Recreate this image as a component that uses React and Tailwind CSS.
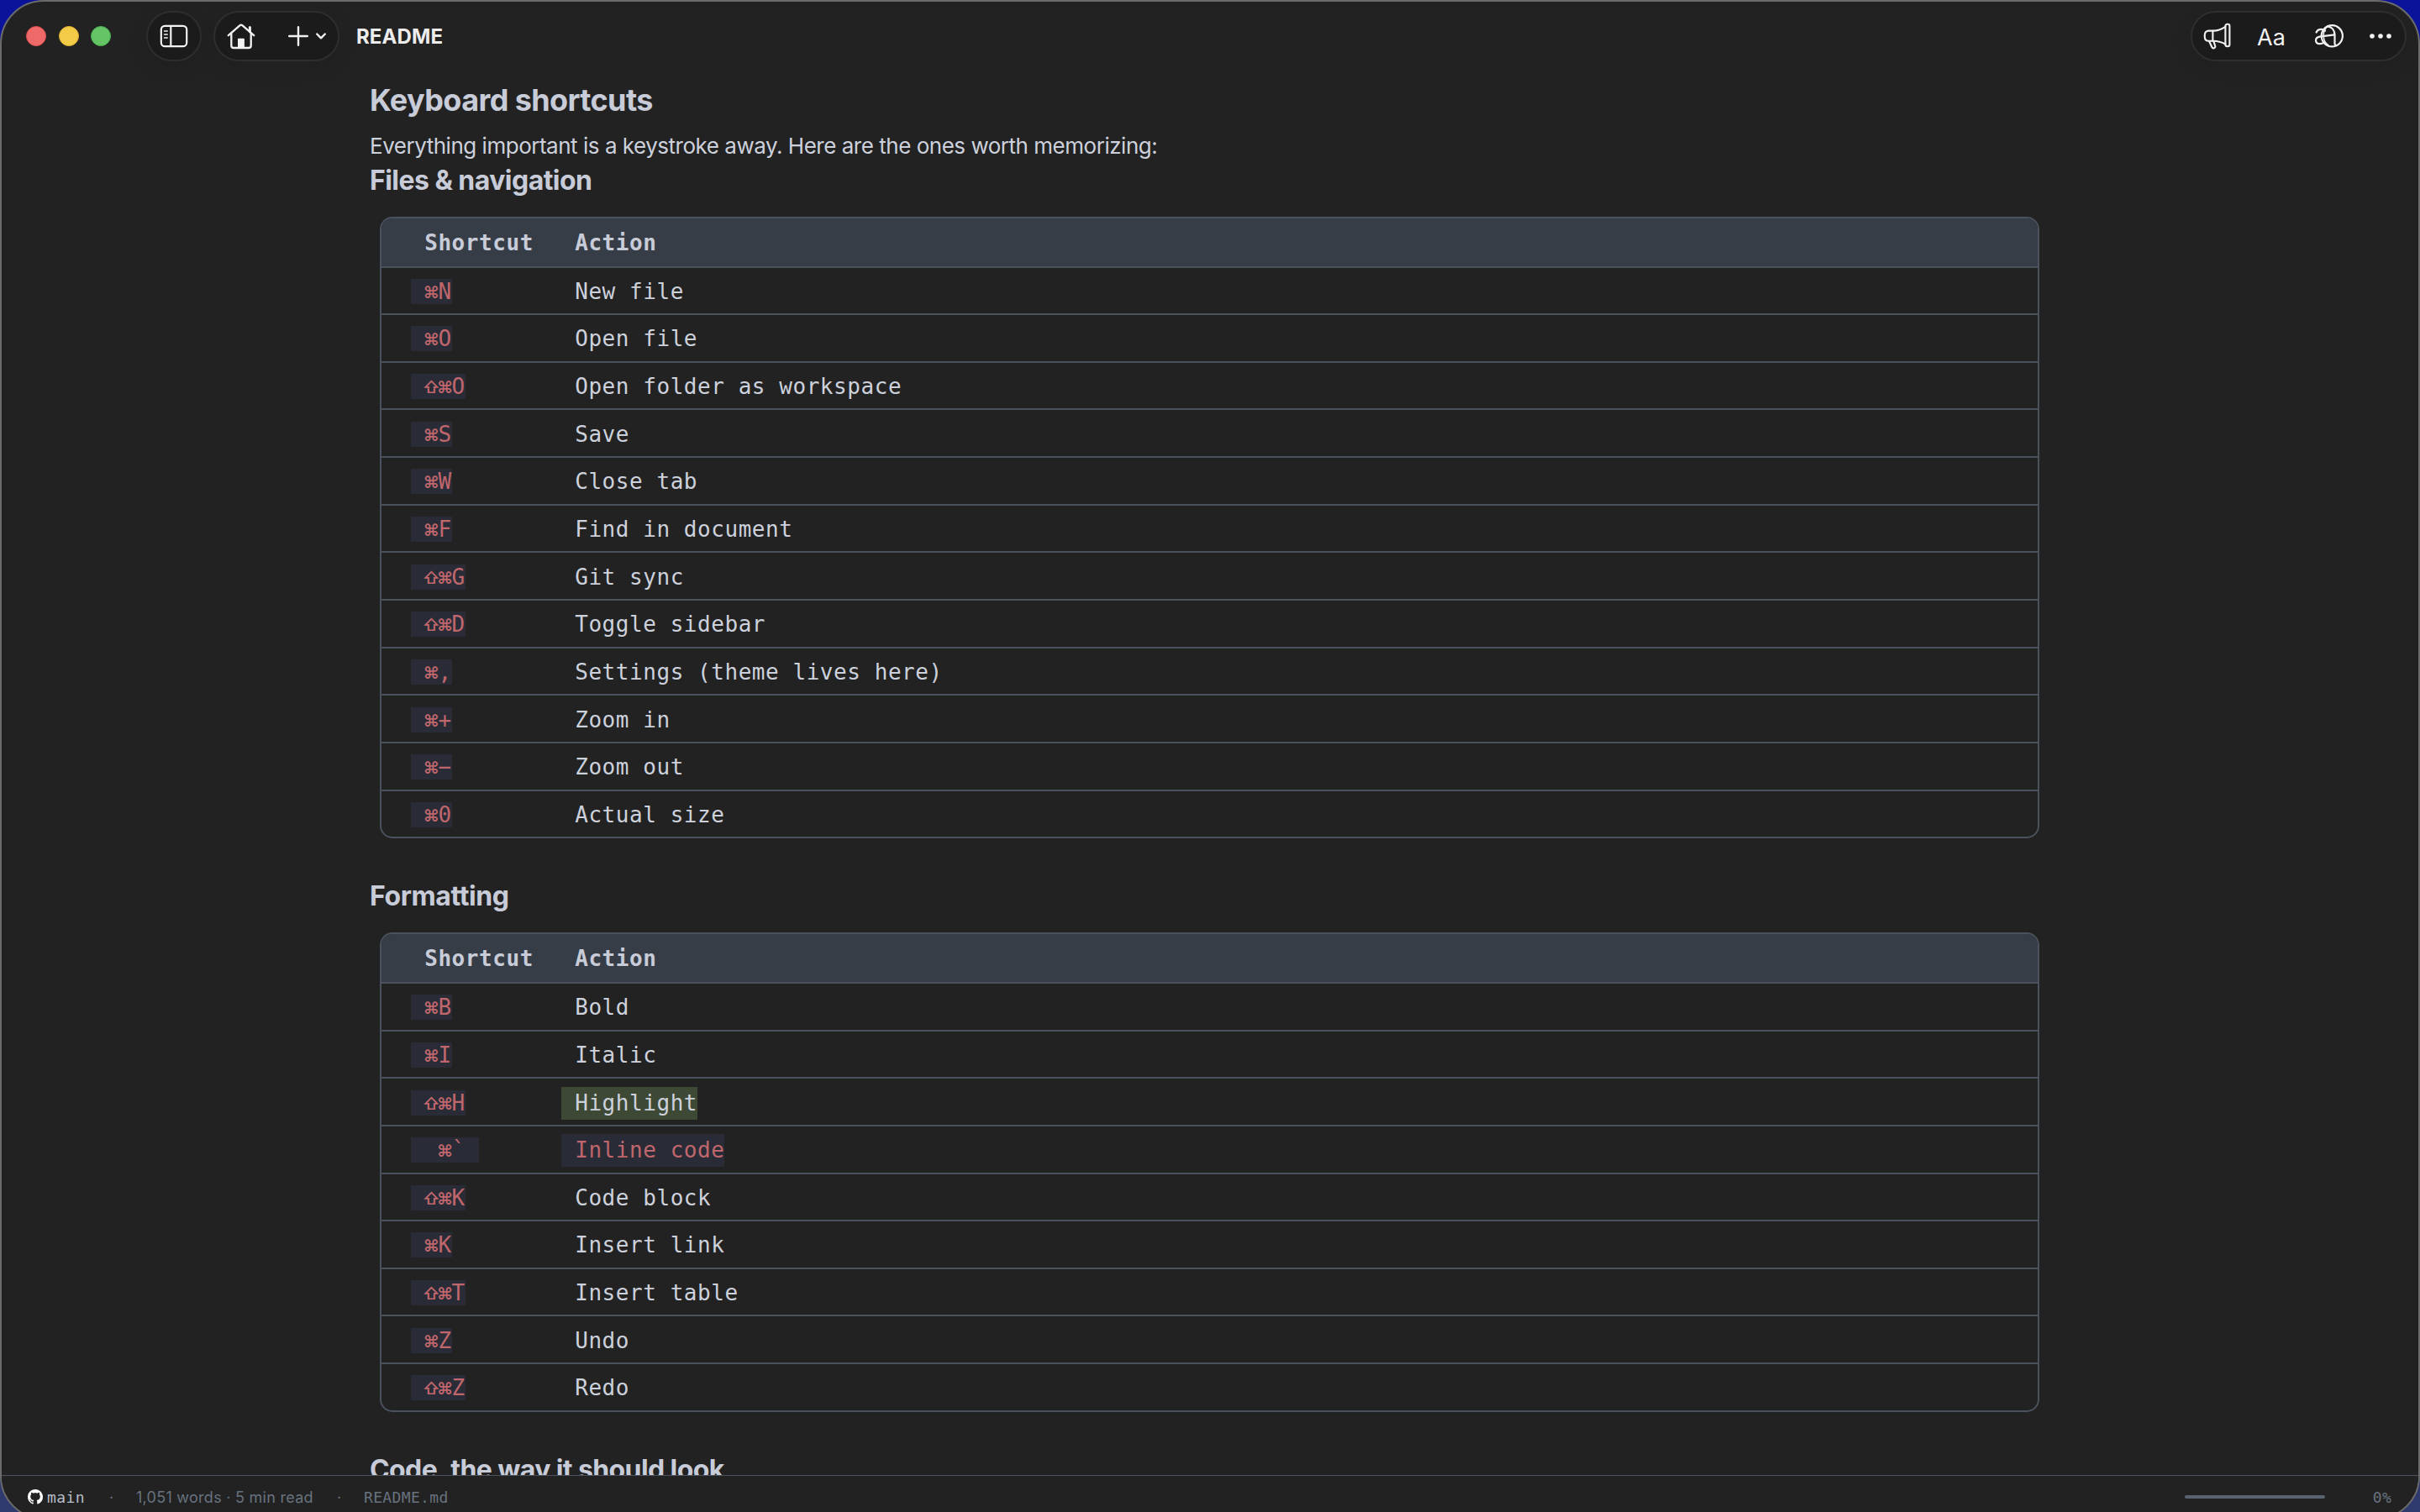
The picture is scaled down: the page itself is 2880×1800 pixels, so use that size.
import clsx from "clsx";

const fileShortcuts = [
  { keys: " ⌘N", action: " New file" },
  { keys: " ⌘O", action: " Open file" },
  { keys: " ⇧⌘O", action: " Open folder as workspace" },
  { keys: " ⌘S", action: " Save" },
  { keys: " ⌘W", action: " Close tab" },
  { keys: " ⌘F", action: " Find in document" },
  { keys: " ⇧⌘G", action: " Git sync" },
  { keys: " ⇧⌘D", action: " Toggle sidebar" },
  { keys: " ⌘,", action: " Settings (theme lives here)" },
  { keys: " ⌘+", action: " Zoom in" },
  { keys: " ⌘−", action: " Zoom out" },
  { keys: " ⌘0", action: " Actual size" },
];

const formatShortcuts = [
  { keys: " ⌘B", action: " Bold" },
  { keys: " ⌘I", action: " Italic" },
  { keys: " ⇧⌘H", action: " Highlight", mark: "highlight" },
  { keys: "  ⌘` ", action: " Inline code", mark: "code" },
  { keys: " ⇧⌘K", action: " Code block" },
  { keys: " ⌘K", action: " Insert link" },
  { keys: " ⇧⌘T", action: " Insert table" },
  { keys: " ⌘Z", action: " Undo" },
  { keys: " ⇧⌘Z", action: " Redo" },
];

function SidebarIcon() {
  return (
    <svg width="34" height="28" viewBox="0 0 34 28" fill="none" stroke="#f2f2f2" strokeWidth="2.2" strokeLinecap="round">
      <rect x="1.8" y="1.8" width="30.4" height="24.4" rx="4.5" />
      <path d="M13.3 2v24" />
      <path d="M5.6 8h3.6M5.6 12h3.6M5.6 16h3.6" strokeWidth="1.6" />
    </svg>
  );
}

function HomeIcon() {
  return (
    <svg width="34" height="32" viewBox="0 0 34 32" fill="none" stroke="#f2f2f2" strokeWidth="2.3" strokeLinecap="round" strokeLinejoin="round">
      <path d="M1.8 15.2 15.6 3.2a2 2 0 0 1 2.7 0l13.9 12" />
      <path d="M5.3 13v14.2a2.8 2.8 0 0 0 2.8 2.8h17.8a2.8 2.8 0 0 0 2.8-2.8V13" />
      <path d="M27.4 5.6v5.2" strokeWidth="3" />
      <path d="M13 29.5V19.6a.8.8 0 0 1 .8-.8h6.3a.8.8 0 0 1 .8.8v9.9z" fill="#f2f2f2" stroke="none" />
    </svg>
  );
}

function MegaphoneIcon() {
  return (
    <svg width="34" height="32" viewBox="0 0 34 32" fill="none" stroke="#f2f2f2" strokeWidth="2.1" strokeLinecap="round" strokeLinejoin="round">
      <path d="M26.4 4.800C21.500 8 17.200 9.600 12 9.600H6.600C3.600 9.600 1.800 11.600 1.800 14.600v2.400c0 3 1.800 4.700 4.800 4.700H12c5.200 0 9.400 1 14.400 3.800" />
      <rect x="26.400" y="1.800" width="5" height="26.400" rx="2.200" />
      <path d="M11.400 9.800v12" />
      <path d="M7.200 22.200l3 6.600c.6 1.300 1.700 1.900 2.700 1.500 1.300-.5 1.700-1.600 1.200-2.900l-1.700-5.200" />
    </svg>
  );
}

// a letter "a" overlapping a globe
function TranslateIcon() {
  return (
    <svg width="36" height="30" viewBox="0 0 36 30" fill="none" stroke="#f2f2f2" strokeWidth="2.200" strokeLinecap="round">
      <circle cx="21.300" cy="14.800" r="12.600" />
      <path d="M16 3.400c5.200.6 8.500 4.900 8.500 10.600v9.400c0 1.500.5 2.400 1.800 2.600" />
      <path d="M2.600 10.500C3.600 8 5.800 6.800 8.500 6.800c2 0 3.500.6 4.500 1.800" />
      <path d="M24.400 13.300 8 15.400c-4 .5-6 2-6 4.600 0 2.600 2 4.200 5 4.200 1.800 0 3.400-.5 4.600-1.500" />
      <path d="M16 3.400C12.800 6 11.200 9.600 11.200 14c0 5.400 2 9.600 5.800 12" strokeWidth="1.600" />
    </svg>
  );
}

function GithubIcon() {
  return (
    <svg width="18" height="18" viewBox="0 0 16 16" fill="#fff">
      <path d="M8 0C3.580 0 0 3.580 0 8c0 3.540 2.290 6.530 5.470 7.590.4.070.55-.17.55-.38 0-.19-.01-.82-.01-1.490-2.010.37-2.530-.49-2.690-.94-.09-.23-.48-.94-.82-1.130-.28-.15-.68-.52-.01-.53.63-.01 1.080.58 1.230.82.72 1.210 1.870.87 2.330.66.07-.52.28-.87.51-1.070-1.780-.2-3.640-.89-3.640-3.950 0-.87.31-1.590.82-2.150-.08-.2-.36-1.020.08-2.120 0 0 .67-.21 2.200.82.64-.18 1.320-.27 2-.27s1.360.09 2 .27c1.530-1.040 2.200-.82 2.200-.82.44 1.100.16 1.920.08 2.120.51.56.82 1.270.82 2.150 0 3.070-1.870 3.750-3.650 3.950.29.25.54.73.54 1.480 0 1.070-.01 1.930-.01 2.200 0 .21.15.46.55.38A8.010 8.010 0 0 0 16 8c0-4.420-3.580-8-8-8z" />
    </svg>
  );
}

function Toolbar() {
  return (
    <header className="flex h-[84px] shrink-0 items-start pt-[11px] pl-[29px] pr-[14px]">
      <div className="flex h-[60px] items-center gap-[14.500px]">
        <span className="size-6 rounded-full border border-[#d9504f] bg-[#ee6a68]" />
        <span className="size-6 rounded-full border border-[#dcae34] bg-[#f4cb46]" />
        <span className="size-6 rounded-full border border-[#49b04d] bg-[#65c466]" />
      </div>
      <button className="ml-[42px] flex h-[60px] w-[66px] items-center justify-center rounded-[30px] border-2 border-[#2e2e2e] bg-[#1b1b1b] shadow-[0_6px_24px_rgba(0,0,0,0.08)]">
        <SidebarIcon />
      </button>
      <div className="ml-[14px] flex h-[60px] w-[150px] items-center rounded-[30px] border-2 border-[#2e2e2e] bg-[#1b1b1b] pl-[14px] shadow-[0_6px_24px_rgba(0,0,0,0.08)]">
        <HomeIcon />
        <svg className="ml-[38px]" width="26" height="26" viewBox="0 0 26 26" stroke="#f2f2f2" strokeWidth="2.400" strokeLinecap="round">
          <path d="M13 2.200v21.600M2.200 13h21.600" />
        </svg>
        <svg className="ml-[7px]" width="14" height="10" viewBox="0 0 14 10" fill="none" stroke="#f2f2f2" strokeWidth="2.400" strokeLinecap="round" strokeLinejoin="round">
          <path d="M2.200 2.500 7 7.300l4.800-4.800" />
        </svg>
      </div>
      <h1 className="ml-[20px] text-[24px] leading-[62px] font-bold tracking-[0.1px] text-[#ececec]">README</h1>
      <div className="ml-auto flex h-[60px] w-[257px] items-center rounded-[30px] border-2 border-[#2e2e2e] bg-[#1b1b1b] pl-[13px] shadow-[0_6px_24px_rgba(0,0,0,0.08)]">
        <MegaphoneIcon />
        <span className="ml-[30px] w-[34px] pt-[2px] text-[27px] leading-none text-[#f2f2f2]">Aa</span>
        <span className="ml-[34px]">
          <TranslateIcon />
        </span>
        <svg className="ml-[29px]" width="28" height="8" viewBox="0 0 28 8" fill="#f2f2f2">
          <circle cx="4" cy="4" r="2.800" />
          <circle cx="14" cy="4" r="2.800" />
          <circle cx="24" cy="4" r="2.800" />
        </svg>
      </div>
    </header>
  );
}

// modifier symbols fill one monospace cell each
function Keys({ value }) {
  return (
    <span className="bg-[#292c36] text-[#c0666d]">
      {[...value].map((ch, i) =>
        ch === "⌘" || ch === "⇧" ? (
          <span key={i} className="inline-flex w-[16.2px] -translate-y-px justify-center font-['Inter',sans-serif] text-[20px] leading-none font-semibold tracking-normal">
            {ch}
          </span>
        ) : (
          ch
        )
      )}
    </span>
  );
}

function ShortcutTable({ rows }) {
  return (
    <div className="mt-[23px] ml-[12px] w-[1975px] overflow-hidden rounded-[15px] border-2 border-[#4a525d] font-['DejaVu_Sans_Mono',monospace] text-[26px] tracking-[0.550px] whitespace-pre">
      <div className="flex h-[56.500px] items-center bg-[#373d47] pt-[2px] pl-[35px] font-bold text-[#c8ccd8]">
        <span className="w-[179px]"> Shortcut</span>
        <span> Action</span>
      </div>
      {rows.map((row) => (
        <div key={row.keys} className="flex h-[56.667px] items-center border-t-2 border-[#4a525d] pt-[3px] pl-[35px] text-[#cdd1dc]">
          <div className="w-[179px]">
            <Keys value={row.keys} />
          </div>
          <span
            className={clsx(
              row.mark === "highlight" && "bg-[#3d4935]",
              row.mark === "code" && "bg-[#292c36] text-[#c0666d]"
            )}
          >
            {row.action}
          </span>
        </div>
      ))}
    </div>
  );
}

function StatusBar() {
  return (
    <footer className="flex h-[51px] shrink-0 items-start border-t border-[#4a525d] bg-[#222222] pt-[13px] pl-[31px] pr-[32px] text-[18px] leading-[26px] text-[#68727f]">
      <span className="mt-[3px]">
        <GithubIcon />
      </span>
      <span className="ml-[5px] w-[45px] font-['DejaVu_Sans_Mono',monospace] tracking-[0.4px] text-[#b9bdc8]">main</span>
      <span className="ml-[29px] w-[32px]">·</span>
      <span className="w-[212px] tracking-[0.270px] whitespace-nowrap">1,051 words · 5 min read</span>
      <span className="ml-[27px] w-[32px]">·</span>
      <span className="font-['DejaVu_Sans_Mono',monospace] tracking-[0.350px]">README.md</span>
      <span className="mt-[10px] ml-auto h-[4px] w-[167px] rounded-full bg-[#59636f]" />
      <span className="ml-[57px] font-['DejaVu_Sans_Mono',monospace] tracking-[0.250px]">0%</span>
    </footer>
  );
}

export default function App() {
  return (
    <div className="h-[1800px] w-[2880px] overflow-hidden bg-linear-to-b from-[#0a129a] to-[#2f3a6e] font-['Inter',sans-serif]">
      <div className="flex h-[1809px] w-full flex-col overflow-hidden rounded-[52px] border-2 border-[#6b6b6b] bg-[#222222]">
        <Toolbar />
        <main className="min-h-0 flex-1 overflow-hidden pt-[11px] pl-[438px] text-[#c8ccd8]">
          <h2 className="text-[36px] leading-[44px] font-bold tracking-[-0.6px]">Keyboard shortcuts</h2>
          <p className="mt-[15px] text-[26px] leading-[36px] tracking-[-0.480px] text-[#cdd1dc]">
            Everything important is a keystroke away. Here are the ones worth memorizing:
          </p>
          <h3 className="mt-[3px] text-[32px] leading-[40px] font-bold tracking-[-0.55px]">Files &amp; navigation</h3>
          <ShortcutTable rows={fileShortcuts} />
          <h3 className="mt-[49px] text-[32px] leading-[40px] font-bold tracking-[-0.4px]">Formatting</h3>
          <ShortcutTable rows={formatShortcuts} />
          <h3 className="mt-[49px] text-[32px] leading-[40px] font-bold tracking-[-0.6px]">Code, the way it should look</h3>
        </main>
        <StatusBar />
      </div>
    </div>
  );
}
